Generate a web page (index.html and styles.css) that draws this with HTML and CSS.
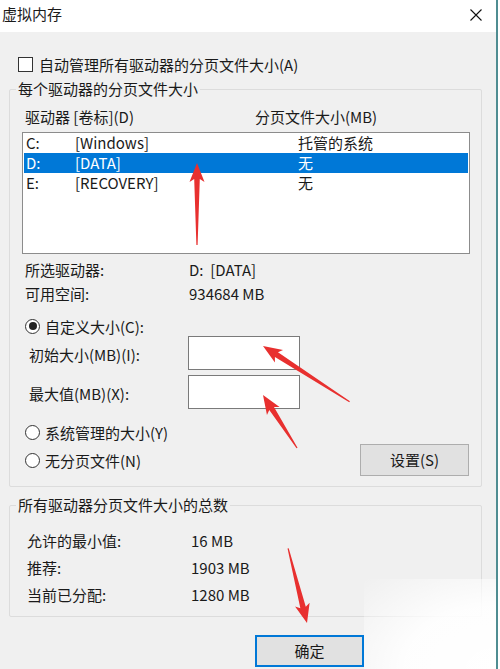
FILE: index.html
```html
<!DOCTYPE html>
<html lang="zh-CN">
<head>
    <meta charset="UTF-8">
    <title>虚拟内存</title>
    <link rel="stylesheet" href="styles.css">
</head>
<body>

<div class="window">
    <div class="titlebar">
        <span class="title">虚拟内存</span>
        <span class="close">
            <svg width="12" height="12" viewBox="0 0 12 12"><path d="M0.5 0.5 L11.5 11.5 M11.5 0.5 L0.5 11.5" stroke="#111" stroke-width="1.1" fill="none"/></svg>
        </span>
    </div>

    <div class="content">
        <div class="check-row"><span class="checkbox"></span>自动管理所有驱动器的分页文件大小(A)</div>

        <fieldset class="group">
            <legend>每个驱动器的分页文件大小</legend>
            <div class="group-inner drives">
                <div class="col-head"><span>驱动器 [卷标](D)</span><span>分页文件大小(MB)</span></div>
                <div class="listbox">
                    <div class="drive"><span>C:</span><span>[Windows]</span><span>托管的系统</span></div>
                    <div class="drive selected"><span>D:</span><span>[DATA]</span><span>无</span></div>
                    <div class="drive"><span>E:</span><span>[RECOVERY]</span><span>无</span></div>
                </div>
                <div class="info">
                    <div class="info-row"><span>所选驱动器:</span><span>D:&nbsp; [DATA]</span></div>
                    <div class="info-row"><span>可用空间:</span><span>934684 MB</span></div>
                </div>
                <div class="radio-row first"><span class="radio on"></span>自定义大小(C):</div>
                <div class="size-row"><span>初始大小(MB)(I):</span><span class="edit"></span></div>
                <div class="size-row second"><span>最大值(MB)(X):</span><span class="edit"></span></div>
                <div class="radio-row third"><span class="radio"></span>系统管理的大小(Y)</div>
                <div class="last-row">
                    <div class="radio-row"><span class="radio"></span>无分页文件(N)</div>
                    <button class="btn set">设置(S)</button>
                </div>
            </div>
        </fieldset>

        <fieldset class="group totals">
            <legend>所有驱动器分页文件大小的总数</legend>
            <div class="group-inner">
                <div class="total-row"><span>允许的最小值:</span><span>16 MB</span></div>
                <div class="total-row"><span>推荐:</span><span>1903 MB</span></div>
                <div class="total-row"><span>当前已分配:</span><span>1280 MB</span></div>
            </div>
        </fieldset>

        <div class="footer">
            <button class="btn ok">确定</button>
        </div>
    </div>

    <div class="haze"></div>

    <!-- red arrows drawn on top of the screenshot -->
    <svg class="marks" width="500" height="669" viewBox="0 0 500 669">
        <defs>
            <polygon id="arrow82" points="0,0 -19,-7.5 -16,-2.8 -82,-0.6 -82,0.6 -16,2.8 -19,7.5"/>
            <polygon id="arrow103" points="0,0 -19,-7.5 -16,-2.8 -103,-0.6 -103,0.6 -16,2.8 -19,7.5"/>
            <polygon id="arrow63" points="0,0 -19,-7.5 -16,-2.8 -63,-0.6 -63,0.6 -16,2.8 -19,7.5"/>
            <polygon id="arrow77" points="0,0 -19,-7.5 -16,-2.8 -77,-0.6 -77,0.6 -16,2.8 -19,7.5"/>
        </defs>
        <g fill="#e8302f">
            <use href="#arrow82" transform="translate(197 163) rotate(-90)"/>
            <use href="#arrow103" transform="translate(263 346) rotate(212.8)"/>
            <use href="#arrow63" transform="translate(263 395) rotate(-122.7)"/>
            <use href="#arrow77" transform="translate(307 623) rotate(75.8)"/>
        </g>
    </svg>
</div>

</body>
</html>
```

FILE: styles.css
```css
body {
    margin: 0;
    background: #fff;
    font-family: "Noto Sans CJK SC", "Noto Sans", sans-serif;
    font-size: 15px;
    color: #1a1a1a;
}
.window {
    position: relative;
    width: 496px;
    height: 669px;
    overflow: hidden;
    background: #f0f0f0;
    border-right: 2px solid #4f8d92;
}
.titlebar {
    height: 32px;
    background: #fff;
    display: flex;
    align-items: center;
    justify-content: space-between;
    padding-bottom: 4px;
    box-sizing: border-box;
}
.title {
    padding-left: 2px;
    line-height: 18px;
}
.close {
    display: flex;
    margin-right: 14px;
    margin-top: 2px;
}
.content {
    padding: 0 14px 0 9px;
}
.check-row {
    display: flex;
    align-items: center;
    height: 20px;
    margin-top: 22px;
    padding-left: 9px;
    gap: 6px;
}
.checkbox {
    width: 13px;
    height: 13px;
    border: 1px solid #333;
    background: #fff;
}
.group {
    margin: 6px 0 0 0;
    padding: 0;
    border: 1px solid #dcdcdc;
    border-radius: 2px;
    min-width: 0;
}
.group legend {
    margin-left: 6px;
    padding: 0 2px;
    line-height: 18px;
}
.group-inner {
    padding: 9px 11px 10px 12px;
}
.col-head {
    display: grid;
    grid-template-columns: 230px auto;
    padding-left: 3px;
    line-height: 20px;
}
.listbox {
    margin-top: 5px;
    height: 120px;
    border: 1px solid #8c8c8c;
    background: #fff;
    padding: 0 1px;
}
.drive {
    display: grid;
    grid-template-columns: 49px 223px auto;
    padding-left: 2px;
    line-height: 20px;
    height: 20px;
}
.drive.selected {
    background: #0078d7;
    color: #fff;
}
.info {
    margin-top: 4px;
}
.info-row {
    display: grid;
    grid-template-columns: 164px auto;
    padding-left: 3px;
    line-height: 24px;
}
.radio-row {
    display: flex;
    align-items: center;
    gap: 5px;
    padding-left: 3px;
    height: 20px;
}
.radio-row.first {
    margin-top: 10px;
}
.radio-row.third {
    margin-top: 13px;
}
.radio {
    width: 13px;
    height: 13px;
    border: 1px solid #333;
    border-radius: 50%;
    background: #fff;
    display: flex;
    align-items: center;
    justify-content: center;
}
.radio.on::after {
    content: "";
    width: 8px;
    height: 8px;
    border-radius: 50%;
    background: #222;
}
.size-row {
    display: grid;
    grid-template-columns: 166px 112px;
    align-items: center;
}
.size-row span:first-child {
    padding-left: 7px;
    padding-top: 3px;
}
.size-row.second {
    margin-top: 5px;
}
.edit {
    height: 32px;
    border: 1px solid #7a7a7a;
    background: #fff;
}
.last-row {
    display: flex;
    align-items: center;
    justify-content: space-between;
    margin-top: 2px;
}
.btn {
    font-family: inherit;
    font-size: 15px;
    color: #1a1a1a;
    background: #e1e1e1;
    border: 1px solid #adadad;
    padding: 0;
    line-height: 18px;
}
.btn.set {
    width: 109px;
    height: 32px;
    margin-right: 1px;
}
.group.totals {
    margin-top: 9px;
}
.totals .group-inner {
    padding: 13px 10px 8px 17px;
}
.total-row {
    display: grid;
    grid-template-columns: 164px auto;
    line-height: 27px;
}
.footer {
    margin-top: 18px;
    padding-left: 246px;
}
.btn.ok {
    width: 109px;
    height: 32px;
    border: 2px solid #0078d7;
}
.haze {
    position: absolute;
    right: -2px;
    bottom: 0;
    width: 134px;
    height: 90px;
    background: radial-gradient(ellipse at 100% 100%, rgba(255,255,255,1) 0%, rgba(255,255,255,0.9) 50%, rgba(255,255,255,0) 100%);
    pointer-events: none;
}
.marks {
    position: absolute;
    left: 0;
    top: 0;
    pointer-events: none;
}
```
